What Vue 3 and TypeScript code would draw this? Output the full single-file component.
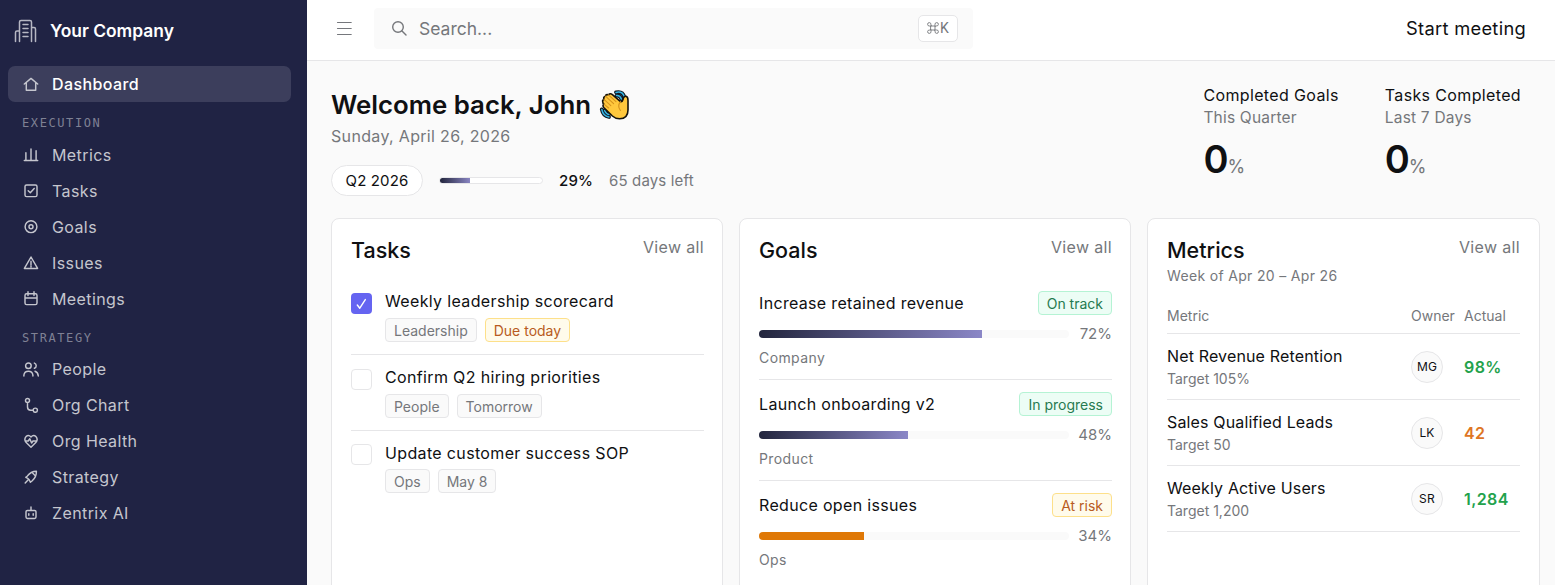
<script setup lang="ts">
interface NavItem { label: string; icon: string; active?: boolean }
interface NavGroup { title?: string; items: NavItem[] }
interface Tag { text: string; tone: string }

const groups: NavGroup[] = [
  { items: [{ label: 'Dashboard', icon: 'M1.3 8 8 2.4 14.7 8M3.3 6.6V14.3H12.7V6.6', active: true }] },
  {
    title: 'EXECUTION',
    items: [
      { label: 'Metrics', icon: 'M1.3 13.4H14.7M2.9 13.4V5.8M8 13.4V2M13.1 13.4V3.8' },
      { label: 'Tasks', icon: 'M3.6 2H12.4Q14 2 14 3.6V12Q14 13.6 12.4 13.6H3.6Q2 13.6 2 12V3.6Q2 2 3.6 2ZM5.2 7.8 7.3 9.8 11.2 5.4' },
      { label: 'Goals', icon: 'M8 1.8A5.9 5.9 0 1 1 8 13.6A5.9 5.9 0 1 1 8 1.8ZM8 5.7A2 2 0 1 1 8 9.7A2 2 0 1 1 8 5.7Z' },
      { label: 'Issues', icon: 'M8 2 14.6 13.4H1.4ZM8 6.2V9.8M8 10.8V12' },
      { label: 'Meetings', icon: 'M3.6 2.8H12.4Q14 2.8 14 4.4V12Q14 13.6 12.4 13.6H3.6Q2 13.6 2 12V4.4Q2 2.8 3.6 2.8ZM2 7H14M5 .8V4.4M11 .8V4.4' },
    ],
  },
  {
    title: 'STRATEGY',
    items: [
      { label: 'People', icon: 'M5.4 1.9A2.8 2.8 0 1 1 5.4 7.5A2.8 2.8 0 1 1 5.4 1.9ZM.9 15V14Q1.5 10.2 5.4 10.2T9.9 14V15M11.4 2.1A2.7 2.7 0 0 1 11.4 7.2M12 10.2Q15 11.2 15.3 15' },
      { label: 'Org Chart', icon: 'M4.5 1.4A2 2 0 1 1 4.5 5.4A2 2 0 1 1 4.5 1.4ZM12.3 11.1A2.1 2.1 0 1 1 12.3 15.3A2.1 2.1 0 1 1 12.3 11.1ZM4.5 5.4V10Q4.5 13.2 7.7 13.2H10.2' },
      { label: 'Org Health', icon: 'M8 14.2 3.2 9.6Q.6 6.4 3 3.6 5.6 1.4 8 4 10.4 1.4 13 3.6 15.4 6.4 12.8 9.6ZM2.2 8H5.2L6.8 5.8 8.6 10 10 8H13.8' },
      { label: 'Strategy', icon: 'M4.2 7.2Q7.8 2.2 13.4 2.2 13.6 8 9 12L7.4 13.2 6.2 10.8 4.8 9.4 2.8 8.4ZM9.8 4.2 11.8 6.2M5 11 2.2 14' },
      { label: 'Zentrix AI', icon: 'M4.4 5.4H11.6Q13 5.4 13 6.8V12Q13 13.4 11.6 13.4H4.4Q3 13.4 3 12V6.8Q3 5.4 4.4 5.4ZM8 2V5.4M5.8 8.8V10.2M10.2 8.8V10.2' },
    ],
  },
]

const stats = [
  { title: 'Completed Goals', period: 'This Quarter', value: 0 },
  { title: 'Tasks Completed', period: 'Last 7 Days', value: 0 },
]

const tasks: { title: string; done: boolean; tags: Tag[] }[] = [
  { title: 'Weekly leadership scorecard', done: true, tags: [{ text: 'Leadership', tone: 'plain' }, { text: 'Due today', tone: 'due' }] },
  { title: 'Confirm Q2 hiring priorities', done: false, tags: [{ text: 'People', tone: 'plain' }, { text: 'Tomorrow', tone: 'plain' }] },
  { title: 'Update customer success SOP', done: false, tags: [{ text: 'Ops', tone: 'plain' }, { text: 'May 8', tone: 'plain' }] },
]

const goals = [
  { title: 'Increase retained revenue', status: 'On track', tone: 'good', pct: 72, team: 'Company' },
  { title: 'Launch onboarding v2', status: 'In progress', tone: 'good', pct: 48, team: 'Product' },
  { title: 'Reduce open issues', status: 'At risk', tone: 'risk', pct: 34, team: 'Ops' },
]

const metrics = [
  { name: 'Net Revenue Retention', target: 'Target 105%', owner: 'MG', actual: '98%', tone: 'up' },
  { name: 'Sales Qualified Leads', target: 'Target 50', owner: 'LK', actual: '42', tone: 'down' },
  { name: 'Weekly Active Users', target: 'Target 1,200', owner: 'SR', actual: '1,284', tone: 'up' },
]
</script>

<template>
  <div class="app">
    <aside class="sidebar">
      <div class="brand">
        <svg class="brand-icon" viewBox="0 0 24 24">
          <path d="M5.5 22.5V3Q5.5 1.5 7 1.5H16Q17.5 1.5 17.5 3V22.5M1.5 22.5V13.5Q1.5 12 3 12H5.5M17.5 8.5H20Q21.5 8.5 21.5 10V22.5M9 5.5H14M9 9.5H14M9 13.5H14M9 17.5H14" />
        </svg>
        <span>Your Company</span>
      </div>
      <nav>
        <div v-for="(g, i) in groups" :key="i" class="group">
          <div v-if="g.title" class="group-title">{{ g.title }}</div>
          <a v-for="n in g.items" :key="n.label" class="nav-item" :class="{ active: n.active }">
            <svg class="nav-icon" viewBox="0 0 16 16"><path :d="n.icon" /></svg>
            <span>{{ n.label }}</span>
          </a>
        </div>
      </nav>
    </aside>

    <div class="page">
      <header class="topbar">
        <svg class="menu" viewBox="0 0 16 16"><path d="M1.5 2.5H15.2M1.5 8.5H15.2M1.5 14.5H15.2" /></svg>
        <div class="search">
          <svg class="lens" viewBox="0 0 16 16"><circle cx="7" cy="7" r="5.3" /><path d="M11 11 15 15" /></svg>
          <span class="placeholder">Search...</span>
          <kbd>
            <svg class="cmd" viewBox="0 0 12 12"><path d="M4 4H8V8H4ZM4 4H2.4A1.7 1.7 0 1 1 4 2.4ZM8 4V2.4A1.7 1.7 0 1 1 9.6 4ZM8 8H9.6A1.7 1.7 0 1 1 8 9.6ZM4 8V9.6A1.7 1.7 0 1 1 2.4 8Z" /></svg>
            <span>K</span>
          </kbd>
        </div>
        <div class="start">Start meeting</div>
      </header>

      <main>
        <section class="hero">
          <div class="welcome">
            <h1>
              <span>Welcome back, John</span>
              <svg class="wave" viewBox="0 0 32 32">
                <path class="motion-edge" d="M17 3.4Q23.5 1.8 25.4 8M17.5 6.6Q21 6.2 22.4 10M2.8 20.4Q4 27 10 28M5.6 21.5Q7 25 10 25.4" />
                <path class="motion" d="M17 3.4Q23.5 1.8 25.4 8M17.5 6.6Q21 6.2 22.4 10M2.8 20.4Q4 27 10 28M5.6 21.5Q7 25 10 25.4" />
                <path class="hand" d="M3.8 13Q3 11 5 10.4 3.9 8 6.4 7.2 6.8 5 9.4 5.8 11.2 3.8 13.4 5.6L21.5 12.6Q23.4 13 24 10.6 24.6 6.8 27.4 7.4 29 8 29 11.4V21Q29 29.6 20.6 29.8 16.4 29.8 13.4 27L5 18.8Q3 16.6 5 15.2Q3.6 14.6 3.8 13Z" />
                <path class="crease" d="M5 10.4 11.8 16.7M9.4 5.8 17 12.6M6.4 7.2 14.6 14.6M5 15.2 9.6 19M21.5 12.6Q18 17 21.4 21.5" />
              </svg>
            </h1>
            <div class="date">Sunday, April 26, 2026</div>
            <div class="quarter">
              <span class="pill">Q2 2026</span>
              <span class="mini-track"><span class="mini-fill" :style="{ width: '29%' }"></span></span>
              <span class="pct">29%</span>
              <span class="left">65 days left</span>
            </div>
          </div>
          <div class="stats">
            <div v-for="s in stats" :key="s.title" class="stat">
              <div class="stat-title">{{ s.title }}</div>
              <div class="stat-period">{{ s.period }}</div>
              <div class="stat-value">{{ s.value }}<small>%</small></div>
            </div>
          </div>
        </section>

        <section class="cards">
          <article class="card">
            <div class="card-head"><h2>Tasks</h2><a>View all</a></div>
            <div class="task-list">
              <div v-for="t in tasks" :key="t.title" class="task">
                <span class="box" :class="{ done: t.done }">
                  <svg v-if="t.done" viewBox="0 0 21 21"><path d="M6.3 12 8.8 15.2 14.3 6.6" /></svg>
                </span>
                <div>
                  <div class="task-title">{{ t.title }}</div>
                  <div class="tags">
                    <span v-for="g in t.tags" :key="g.text" class="tag" :class="g.tone">{{ g.text }}</span>
                  </div>
                </div>
              </div>
            </div>
          </article>

          <article class="card">
            <div class="card-head"><h2>Goals</h2><a>View all</a></div>
            <div class="goal-list">
              <div v-for="g in goals" :key="g.title" class="goal">
                <div class="goal-top">
                  <span class="goal-title">{{ g.title }}</span>
                  <span class="tag" :class="g.tone">{{ g.status }}</span>
                </div>
                <div class="goal-progress">
                  <span class="track"><span class="fill" :class="g.tone" :style="{ width: g.pct + '%' }"></span></span>
                  <span class="goal-pct">{{ g.pct }}%</span>
                </div>
                <div class="goal-team">{{ g.team }}</div>
              </div>
            </div>
          </article>

          <article class="card">
            <div class="card-head"><h2>Metrics</h2><a>View all</a></div>
            <div class="week">Week of Apr 20 – Apr 26</div>
            <div class="m-row m-head"><span>Metric</span><span>Owner</span><span>Actual</span></div>
            <div v-for="m in metrics" :key="m.name" class="m-row">
              <div class="m-info">
                <div class="m-name">{{ m.name }}</div>
                <div class="m-target">{{ m.target }}</div>
              </div>
              <span class="avatar">{{ m.owner }}</span>
              <span class="actual" :class="m.tone">{{ m.actual }}</span>
            </div>
          </article>
        </section>
      </main>
    </div>
  </div>
</template>

<style>
html, body { margin: 0; overflow: hidden; }
</style>

<style scoped>
.app, .app * { box-sizing: border-box; }
.app {
  display: flex;
  width: 100vw;
  height: 100vh;
  overflow: hidden;
  background: #fafafa;
  color: #0f1012;
  font-family: Inter, "Liberation Sans", sans-serif;
  font-size: 16px;
}
svg { fill: none; stroke: currentColor; stroke-linecap: round; stroke-linejoin: round; flex: none; display: block; }

.sidebar { width: 307px; flex: none; background: #202344; padding: 0 16px 0 8px; }
.brand { display: flex; align-items: center; height: 66px; padding: 0 0 5px 6px; gap: 12px; color: #fff; font-size: 17.4px; font-weight: 600; }
.brand-icon { width: 24px; height: 24px; color: #b6b7c3; stroke-width: 1.5; }
.group-title {
  height: 35px; padding: 13px 0 0 14px;
  font: 12px/16px "DejaVu Sans Mono", monospace;
  letter-spacing: 1.6px; color: #7f8194;
}
.group + .group + .group .group-title { height: 34px; }
.nav-item { display: flex; align-items: center; height: 36px; padding-left: 15px; gap: 13px; border-radius: 7px; color: #c5c6ce; letter-spacing: .4px; }
.nav-item.active { background: #3c3e5c; color: #fff; font-weight: 500; }
.nav-icon { width: 16px; height: 16px; stroke-width: 1.45; color: #c5c6ce; }

.page { flex: 1; min-width: 0; }
.topbar { display: flex; align-items: center; height: 61px; padding: 0 29px 4px; background: #fff; border-bottom: 1px solid #e6e6e8; }
.menu { width: 16px; height: 16px; color: #75777c; stroke-width: 1.2; }
.search { display: flex; align-items: center; width: 599px; height: 41px; margin-left: 22px; padding: 0 15px 0 17px; border-radius: 4px; background: #fafafa; color: #75777b; }
.lens { width: 16px; height: 16px; stroke-width: 1.4; }
.placeholder { margin-left: 12px; font-size: 17.5px; }
kbd { display: flex; align-items: center; justify-content: center; gap: 1px; width: 40px; height: 27px; margin-left: auto; border: 1px solid #e6e6e8; border-radius: 5px; background: #fff; font: 14px Roboto, sans-serif; }
.cmd { width: 12px; height: 12px; stroke-width: .9; }
.start { margin-left: auto; font-size: 18.3px; letter-spacing: .3px; }

main { padding: 0 15px 0 24px; }
.hero { display: flex; justify-content: space-between; height: 157px; }
h1, h2 { margin: 0; font-weight: 500; }
h1 { display: flex; align-items: center; gap: 8px; height: 36px; margin-top: 25px; font-size: 25.8px; font-weight: 600; }
.wave { width: 32px; height: 32px; margin-top: 2px; }
.motion-edge { stroke: #101820; stroke-width: 3.8; }
.motion { stroke: #35b5e5; stroke-width: 1.5; }
.hand { fill: #ffc83d; stroke: #15130c; stroke-width: 1.6; }
.crease { stroke: #d5921d; stroke-width: 1.1; }
.date { height: 25px; margin-top: 2px; line-height: 25px; letter-spacing: .33px; color: #75777b; }
.quarter { display: flex; align-items: center; margin-top: 16px; height: 31px; font-size: 15px; letter-spacing: .15px; }
.pill { width: 92px; height: 31px; line-height: 29px; text-align: center; border: 1px solid #e6e6e8; border-radius: 16px; background: #fff; }
.mini-track { width: 104px; height: 7px; margin-left: 16px; border: 1px solid #e6e6e8; border-radius: 4px; background: #fff; overflow: hidden; }
.mini-fill { display: block; height: 100%; background: linear-gradient(90deg, #22253d, #8985c2); }
.pct { width: 34px; margin-left: 16px; font-weight: 500; }
.left { margin-left: 16px; color: #75777b; }
.stats { display: flex; gap: 46px; padding: 23px 19px 0 0; }
.stat-title, .stat-period { line-height: 22px; letter-spacing: .36px; }
.stat-period { height: 22px; line-height: 23px; color: #75777b; font-size: 15.5px; letter-spacing: .2px; }
.stat-value { margin-top: 8px; line-height: 46px; font-size: 38px; font-weight: 600; }
.stat-value small { margin-left: -1px; color: #75777b; font-size: 18px; font-weight: 400; }

.cards { display: grid; grid-template-columns: 392px 392px 1fr; gap: 16px; }
.card { height: 400px; padding: 0 18px 0 19px; border: 1px solid #e6e6e8; border-radius: 8px; background: #fff; }
.card:last-child { padding-right: 19px; }
.card-head { display: flex; justify-content: space-between; height: 46px; padding-top: 16px; }
h2 { font-size: 21.5px; line-height: 31px; }
.card-head a { line-height: 24px; letter-spacing: .35px; color: #75777b; }
.task-list { padding-top: 14px; }
.task { display: flex; gap: 13px; height: 76px; padding-top: 12px; border-bottom: 1px solid #e6e6e8; }
.box { width: 21px; height: 21px; margin-top: 2px; border: 1px solid #e6e6e8; border-radius: 4px; }
.box.done { border: 0; background: #6564f1; color: #fff; stroke-width: 1.4; }
.task-title { line-height: 20px; letter-spacing: .35px; }
.tags { display: flex; gap: 8px; margin-top: 7px; }
.task:last-child { border: 0; }
.task:last-child .tags { margin-top: 6px; }
.task:last-child .box { margin-top: 1px; }
.tag { height: 24px; padding: 0 8px; border: 1px solid #e6e6e8; border-radius: 4px; font-size: 14px; line-height: 24px; white-space: nowrap; }
.plain { background: #fafafa; color: #75777b; }
.tag.due, .tag.risk { background: #fffbeb; border-color: #fde08a; color: #b85b22; }
.tag.good { background: #ecfdf5; border-color: #b5f3d4; color: #267a50; }
.goal-list { padding-top: 14px; }
.goal { height: 101px; padding-top: 12px; border-bottom: 1px solid #e6e6e8; }
.goal:last-child { border: 0; }
.goal-top { display: flex; justify-content: space-between; align-items: center; height: 24px; }
.goal-title { letter-spacing: .33px; }
.goal-progress { display: flex; align-items: center; justify-content: space-between; height: 20px; margin-top: 9px; }
.track { width: 310px; height: 8px; border-radius: 4px; background: #fafafa; overflow: hidden; }
.fill { display: block; height: 100%; background: linear-gradient(90deg, #22253d, #8b87c7); }
.fill.risk { background: #df7806; }
.goal-pct { margin-bottom: 2px; font-size: 15px; color: #75777b; }
.goal-team { margin-top: 4px; line-height: 20px; font-size: 14px; letter-spacing: .4px; color: #75777b; }
.week { height: 20px; line-height: 22px; font-size: 14px; letter-spacing: .33px; color: #75777b; }
.m-row { display: grid; grid-template-columns: 244px 53px 1fr; align-items: center; height: 66px; border-bottom: 1px solid #e6e6e8; }
.m-head { height: 49px; padding-top: 13px; font-size: 14px; color: #75777b; }
.m-info { padding-top: 2px; }
.m-name { line-height: 22px; letter-spacing: .15px; }
.m-target { line-height: 23px; font-size: 14px; color: #75777b; }
.avatar { width: 32px; height: 32px; border: 1px solid #e6e6e8; border-radius: 50%; background: #fafafa; text-align: center; font-size: 12px; letter-spacing: .2px; line-height: 30px; }
.actual { font-weight: 600; letter-spacing: .4px; }
.up { color: #23a24c; }
.down { color: #de7524; }
</style>
